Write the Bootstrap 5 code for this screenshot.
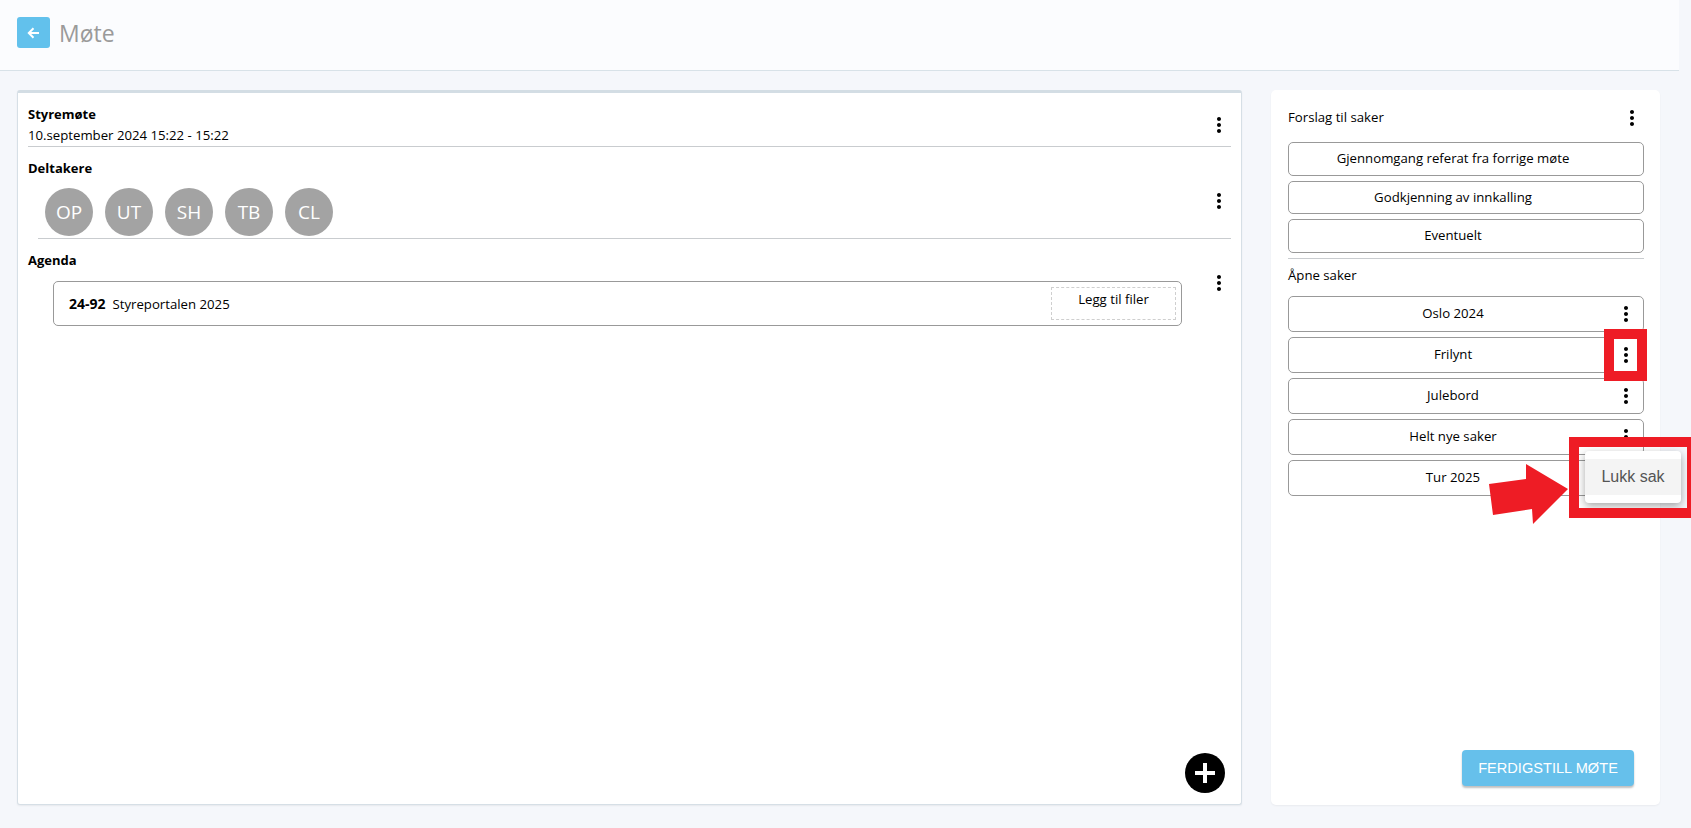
<!DOCTYPE html>
<html lang="no">
<head>
<meta charset="utf-8">
<title>Møte</title>
<link href="https://cdn.jsdelivr.net/npm/bootstrap@5.3.0/dist/css/bootstrap.min.css" rel="stylesheet">
<style>
html,body{height:828px;overflow:hidden}
body{background:#f5f7fb;font-family:"Open Sans","Noto Sans",sans-serif;font-size:13.2px;line-height:21px;color:#000;position:relative}
.top-bar{width:1679px;height:71px;background:#fbfcfe;border-bottom:1px solid #d8e2e8;padding:0 0 5px 17px}
.back-btn{width:33px;height:31px;background:#62c1ec;border:0;border-radius:3px;padding:0}
.page-title{font-size:23px;line-height:32px;color:#9a9a9a;margin:0 0 0 9px;font-weight:400}
.work-area{padding:19px 31px 0 17px;gap:29px}
.meet-panel{width:1225px;height:715px;background:#fff;border:1px solid #d6dfe6;border-top:3px solid #d3dde4;border-radius:3px;padding:0 10px;box-shadow:0 1px 2px rgba(0,0,0,.06)}
.side-panel{width:389px;height:715px;background:#fff;border-radius:5px;padding:16px 16px 19px 17px;box-shadow:0 1px 2px rgba(0,0,0,.05)}
.sect-a{padding-top:10.5px;height:54px;border-bottom:1px solid #c9cccf}
.sect-b{padding-top:10.5px;height:91px}
.rule-b{border-top:1px solid #c9cccf;margin-left:10px}
.sect-c{padding-top:10.5px}
.fw-head{font-weight:700;font-size:13px}
.kebab{width:24px;height:24px;display:block;flex:none}
.kebab-b{margin-top:31.500px}
.kebab-c{margin-top:21.500px}
.avatars{padding:9.500px 0 0 17px;gap:12px}
.avatar{width:48px;height:48px;border-radius:50%;background:#a3a3a3;color:#fff;font-size:19px}
.agenda-item{margin:10.500px 25px 0 25px;width:1129px;height:45px;border:1px solid #999;border-radius:5px;padding:0 5px 0 15px}
.agenda-code{font-weight:700;font-size:14px;margin-right:7px}
.drop-zone{width:125px;height:33px;border:1px dashed #cfcfcf;text-align:center;padding-top:1px}
.fab-row{margin-top:auto;padding:0 6px 11px 0}
.fab{width:40px;height:40px;border-radius:50%;background:#000;border:0;padding:0}
.side-head{height:24px;margin-bottom:12px}
.side-title{margin-top:-2px}
.case-stack{gap:5px}
.case-btn{border:1px solid #999;border-radius:5px;background:#fff}
.case-btn.short{height:33.500px}
.case-btn.tall{height:36px}
.case-label{flex:1;text-align:center}
.case-end{width:26px;flex:none;padding-right:8px}
.case-end .kebab{margin-left:-3px}
.side-rule{border-top:1px solid #c9cccf;margin:5px 0 6px}
.open-label{margin-bottom:10px}
.finish-wrap{margin-top:auto;padding-right:10px}
.finish-btn{width:172px;height:36px;background:#66c0eb;color:#fff;border:0;border-radius:4px;font-family:"Liberation Sans",sans-serif;font-size:14.6px;box-shadow:0 2px 2px rgba(0,0,0,.25);padding:0}
.popup-menu{position:absolute;left:1585px;top:451px;width:96px;height:52px;background:#fff;border-radius:4px;box-shadow:0 3px 8px rgba(0,0,0,.35);padding:8px 0}
.popup-item{height:36px;background:#f4f4f4;color:#555;font-family:"Liberation Sans",sans-serif;font-size:16px;line-height:36px;text-align:center}
.annot{position:absolute;left:0;top:0;pointer-events:none}
</style>
</head>
<body>
<svg width="0" height="0" class="position-absolute"><defs>
<symbol id="dots" viewBox="0 0 24 24"><path d="M12 8c1.100 0 2-.9 2-2s-.9-2-2-2-2 .9-2 2 .9 2 2 2zm0 2c-1.100 0-2 .9-2 2s.9 2 2 2 2-.9 2-2-.9-2-2-2zm0 6c-1.100 0-2 .9-2 2s.9 2 2 2 2-.9 2-2-.9-2-2-2z" fill="#000"/></symbol>
</defs></svg>

<header class="top-bar d-flex align-items-center">
  <button class="back-btn d-flex align-items-center justify-content-center" type="button" aria-label="Tilbake">
    <svg width="13" height="12" viewBox="0 0 13 12"><path d="M12 6H2M6.500 1.300 1.800 6l4.700 4.700" fill="none" stroke="#fff" stroke-width="2"/></svg>
  </button>
  <h1 class="page-title">Møte</h1>
</header>

<main class="work-area d-flex">
  <section class="meet-panel d-flex flex-column">
    <div class="sect-a d-flex justify-content-between align-items-center">
      <div><div class="fw-head">Styremøte</div><div>10.september 2024 15:22 - 15:22</div></div>
      <svg class="kebab"><use href="#dots"/></svg>
    </div>
    <div class="sect-b d-flex justify-content-between align-items-start">
      <div>
        <div class="fw-head">Deltakere</div>
        <div class="avatars d-flex">
          <div class="avatar d-flex align-items-center justify-content-center">OP</div>
          <div class="avatar d-flex align-items-center justify-content-center">UT</div>
          <div class="avatar d-flex align-items-center justify-content-center">SH</div>
          <div class="avatar d-flex align-items-center justify-content-center">TB</div>
          <div class="avatar d-flex align-items-center justify-content-center">CL</div>
        </div>
      </div>
      <svg class="kebab kebab-b"><use href="#dots"/></svg>
    </div>
    <div class="rule-b"></div>
    <div class="sect-c d-flex justify-content-between align-items-start">
      <div>
        <div class="fw-head">Agenda</div>
        <div class="agenda-item d-flex align-items-center justify-content-between">
          <div><span class="agenda-code">24-92</span>Styreportalen 2025</div>
          <div class="drop-zone">Legg til filer</div>
        </div>
      </div>
      <svg class="kebab kebab-c"><use href="#dots"/></svg>
    </div>
    <div class="fab-row d-flex justify-content-end">
      <button class="fab d-flex align-items-center justify-content-center" type="button" aria-label="Legg til">
        <svg width="20" height="20" viewBox="0 0 20 20"><path d="M8 0h4v8h8v4h-8v8H8v-8H0V8h8z" fill="#fff"/></svg>
      </button>
    </div>
  </section>

  <aside class="side-panel d-flex flex-column">
    <div class="side-head d-flex justify-content-between align-items-center">
      <span class="side-title">Forslag til saker</span>
      <svg class="kebab"><use href="#dots"/></svg>
    </div>
    <div class="case-stack d-flex flex-column">
      <div class="case-btn short d-flex align-items-center"><span class="case-label">Gjennomgang referat fra forrige møte</span><span class="case-end"></span></div>
      <div class="case-btn short d-flex align-items-center"><span class="case-label">Godkjenning av innkalling</span><span class="case-end"></span></div>
      <div class="case-btn short d-flex align-items-center"><span class="case-label">Eventuelt</span><span class="case-end"></span></div>
    </div>
    <div class="side-rule"></div>
    <div class="open-label">Åpne saker</div>
    <div class="case-stack d-flex flex-column">
      <div class="case-btn tall d-flex align-items-center"><span class="case-label">Oslo 2024</span><span class="case-end"><svg class="kebab"><use href="#dots"/></svg></span></div>
      <div class="case-btn tall d-flex align-items-center"><span class="case-label">Frilynt</span><span class="case-end"><svg class="kebab"><use href="#dots"/></svg></span></div>
      <div class="case-btn tall d-flex align-items-center"><span class="case-label">Julebord</span><span class="case-end"><svg class="kebab"><use href="#dots"/></svg></span></div>
      <div class="case-btn tall d-flex align-items-center"><span class="case-label">Helt nye saker</span><span class="case-end"><svg class="kebab"><use href="#dots"/></svg></span></div>
      <div class="case-btn tall d-flex align-items-center"><span class="case-label">Tur 2025</span><span class="case-end"></span></div>
    </div>
    <div class="finish-wrap d-flex justify-content-end">
      <button class="finish-btn" type="button">FERDIGSTILL MØTE</button>
    </div>
  </aside>
</main>

<div class="popup-menu"><div class="popup-item">Lukk sak</div></div>

<svg class="annot" width="1691" height="828" viewBox="0 0 1691 828">
  <rect x="1609" y="334" width="33" height="42" fill="none" stroke="#ee1c25" stroke-width="10"/>
  <rect x="1574" y="442" width="118" height="71" fill="none" stroke="#ee1c25" stroke-width="10"/>
  <polygon points="1489,484 1526,479 1526,464 1568,489 1533,524 1532,509 1493,515" fill="#ee1c25"/>
</svg>
</body>
</html>
